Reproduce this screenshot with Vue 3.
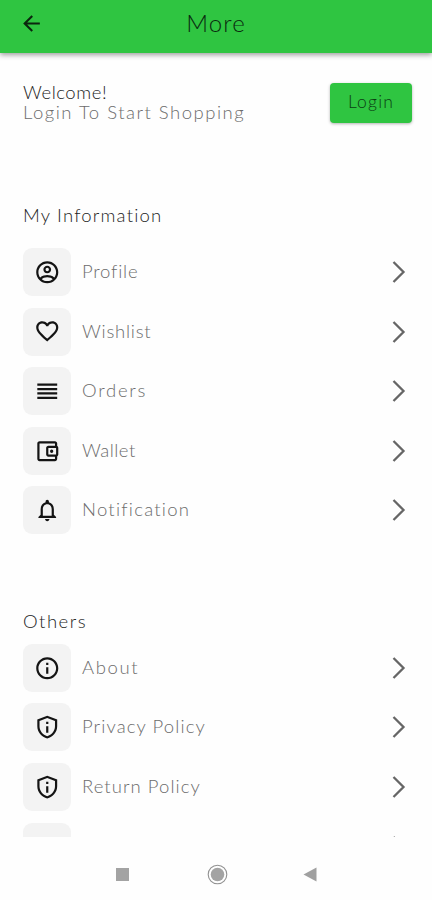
<script setup>
const icons = {
  profile: 'M12 2C6.48 2 2 6.48 2 12s4.48 10 10 10 10-4.48 10-10S17.52 2 12 2zM7.07 18.28c.43-.9 3.05-1.78 4.93-1.78s4.51.88 4.93 1.78C15.57 19.36 13.86 20 12 20s-3.57-.64-4.93-1.72zm11.29-1.45c-1.43-1.74-4.9-2.33-6.36-2.33s-4.93.59-6.36 2.33C4.62 15.49 4 13.82 4 12c0-4.41 3.59-8 8-8s8 3.59 8 8c0 1.82-.62 3.49-1.64 4.83zM12 6c-1.94 0-3.5 1.56-3.5 3.5S10.06 13 12 13s3.5-1.56 3.5-3.5S13.94 6 12 6zm0 5c-.83 0-1.5-.67-1.5-1.5S11.17 8 12 8s1.5.67 1.5 1.5S12.83 11 12 11z',
  heart: 'M16.5 3c-1.74 0-3.41.81-4.5 2.09C10.91 3.81 9.24 3 7.5 3 4.42 3 2 5.42 2 8.5c0 3.78 3.4 6.86 8.55 11.54L12 21.35l1.45-1.32C18.6 15.36 22 12.28 22 8.5 22 5.42 19.58 3 16.5 3zm-4.4 15.55l-.1.1-.1-.1C7.14 14.24 4 11.39 4 8.5 4 6.5 5.5 5 7.5 5c1.54 0 3.04.99 3.57 2.36h1.87C13.46 5.99 14.96 5 16.5 5c2 0 3.5 1.5 3.5 3.5 0 2.89-3.14 5.74-7.9 10.05z',
  orders: 'M3 15h18v-2H3v2zm0 4h18v-2H3v2zm0-8h18V9H3v2zm0-6v2h18V5H3z',
  wallet: 'M21 7.28V5c0-1.1-.9-2-2-2H5c-1.11 0-2 .9-2 2v14c0 1.1.89 2 2 2h14c1.1 0 2-.9 2-2v-2.28c.59-.35 1-.98 1-1.72V9c0-.74-.41-1.37-1-1.72zM20 9v6h-7V9h7zM5 19V5h14v2h-6c-1.1 0-2 .9-2 2v6c0 1.1.9 2 2 2h6v2H5zM16 10.5a1.5 1.5 0 1 0 0 3 1.5 1.5 0 0 0 0-3z',
  bell: 'M12 22c1.1 0 2-.9 2-2h-4c0 1.1.9 2 2 2zm6-6v-5c0-3.07-1.63-5.64-4.5-6.32V4c0-.83-.67-1.5-1.5-1.5s-1.5.67-1.5 1.5v.68C7.64 5.36 6 7.92 6 11v5l-2 2v1h16v-1l-2-2zm-2 1H8v-6c0-2.48 1.51-4.5 4-4.5s4 2.02 4 4.5v6z',
  info: 'M11 7h2v2h-2zm0 4h2v6h-2zm1-9C6.48 2 2 6.48 2 12s4.48 10 10 10 10-4.48 10-10S17.52 2 12 2zm0 18c-4.41 0-8-3.59-8-8s3.59-8 8-8 8 3.59 8 8-3.59 8-8 8z',
  shield: 'M12 1.5L3 5v6.2c0 5.3 3.84 9.7 9 11.1 5.16-1.4 9-5.8 9-11.1V5l-9-3.5zm0 2.15l7 2.75V11.2c0 4.2-2.98 7.7-7 9-4.02-1.3-7-4.8-7-9V6.4l7-2.75zM11 7h2v2h-2zm0 4h2v6h-2z',
}
const sections = [
  {
    title: 'My Information', key: 'information', spacing: 1.2,
    rows: [
      { label: 'Profile', icon: 'profile', spacing: 0.8 },
      { label: 'Wishlist', icon: 'heart', spacing: 0.75 },
      { label: 'Orders', icon: 'orders', spacing: 1.75 },
      { label: 'Wallet', icon: 'wallet', spacing: 0.45 },
      { label: 'Notification', icon: 'bell', spacing: 1.25 },
    ],
  },
  {
    title: 'Others', key: 'others', spacing: 1.5,
    rows: [
      { label: 'About', icon: 'info', spacing: 1.6 },
      { label: 'Privacy Policy', icon: 'shield', spacing: 1.1 },
      { label: 'Return Policy', icon: 'shield', spacing: 1.05 },
      { label: '', icon: '', spacing: 0 },
    ],
  },
]
</script>

<template>
  <div class="screen">
    <header class="bar">
      <svg class="back" viewBox="0 0 24 24"><path d="M20 11H7.83l5.59-5.59L12 4l-8 8 8 8 1.41-1.41L7.83 13H20v-2z" /></svg>
      <h1>More</h1>
    </header>
    <main>
      <div class="welcome">
        <div class="greeting">
          <div class="hello">Welcome!</div>
          <div class="hint">Login To Start Shopping</div>
        </div>
        <button class="login">Login</button>
      </div>
      <section v-for="s in sections" :key="s.key" :class="s.key">
        <h2 :style="{ letterSpacing: s.spacing + 'px' }">{{ s.title }}</h2>
        <div class="rows">
          <div v-for="(r, i) in s.rows" :key="i" class="row">
            <span class="tile">
              <svg v-if="r.icon" viewBox="0 0 24 24"><path fill-rule="evenodd" :d="icons[r.icon]" /></svg>
            </span>
            <span class="label" :style="{ letterSpacing: r.spacing + 'px' }">{{ r.label }}</span>
            <svg class="chevron" viewBox="0 0 14 22"><path d="M1.500 1 11.500 11 1.500 21" /></svg>
          </div>
        </div>
      </section>
    </main>
    <nav>
      <svg viewBox="0 0 432 63">
        <rect x="116" y="31" width="13" height="13" fill="#a3a3a3" />
        <circle cx="217.500" cy="37.500" r="9.300" fill="none" stroke="#929292" stroke-width="1.100" />
        <circle cx="217.500" cy="37.500" r="6.800" fill="#a3a3a3" />
        <path d="M303.500 37.500 316.500 30.500V44.500z" fill="#a0a0a0" />
      </svg>
    </nav>
  </div>
</template>

<style>
body { margin: 0; background: #fefefe; }
</style>

<style scoped>
.screen { width: 432px; height: 900px; overflow: hidden; display: flex; flex-direction: column; background: #fefefe; font-family: Lato, "Open Sans", sans-serif; font-weight: 300; }
.bar { height: 53px; flex: none; display: grid; grid-template-columns: 60px 1fr 60px; align-items: center; box-sizing: border-box; padding-bottom: 7px; background: #2fc541; box-shadow: 0 2px 5px rgba(0, 0, 0, .38); }
.back { width: 25px; height: 25px; margin-left: 19px; fill: #0b260e; }
h1 { margin: 0; text-align: center; font-size: 24px; line-height: 28px; font-weight: 300; letter-spacing: 1.100px; color: #0a2a0f; }
main { height: 784px; flex: none; overflow: hidden; box-sizing: border-box; padding: 30px 20px 0 23px; }
.welcome { display: flex; justify-content: space-between; height: 40px; }
.greeting { font-size: 18.500px; line-height: 20px; margin-top: -1.500px; }
.hello { color: #222; letter-spacing: .55px; }
.hint { color: #6c6c6c; letter-spacing: 1.500px; }
.login { width: 82px; height: 40px; border: 0; border-radius: 4px; padding: 0 0 3px; background: #2fc541; box-shadow: 0 1px 3px rgba(0, 0, 0, .3); font: 300 17.500px Lato, sans-serif; letter-spacing: 1.200px; color: #0b3d13; }
h2 { margin: 0; font-size: 18.500px; line-height: 24px; font-weight: 300; color: #1c1c1c; }
.information { padding-top: 80px; }
.information .rows { padding-top: 21px; }
.others { padding-top: 74.500px; }
.others .rows { padding-top: 11px; }
.rows { display: grid; gap: 11.600px; }
.row { display: flex; align-items: center; height: 48px; }
.tile { width: 48px; height: 48px; flex: none; border-radius: 9px; background: #f3f3f3; display: flex; align-items: center; justify-content: center; }
.tile svg { width: 26.500px; height: 26.500px; margin-right: .5px; fill: #141414; }
.label { flex: 1; margin-left: 11px; padding-bottom: 2px; font-size: 18.500px; line-height: 24px; color: #6c6c6c; white-space: nowrap; }
.chevron { width: 14px; height: 22px; margin-right: 6px; fill: none; stroke: #666; stroke-width: 2.300; }
nav { height: 63px; flex: none; }
nav svg { display: block; width: 432px; height: 63px; }
</style>
